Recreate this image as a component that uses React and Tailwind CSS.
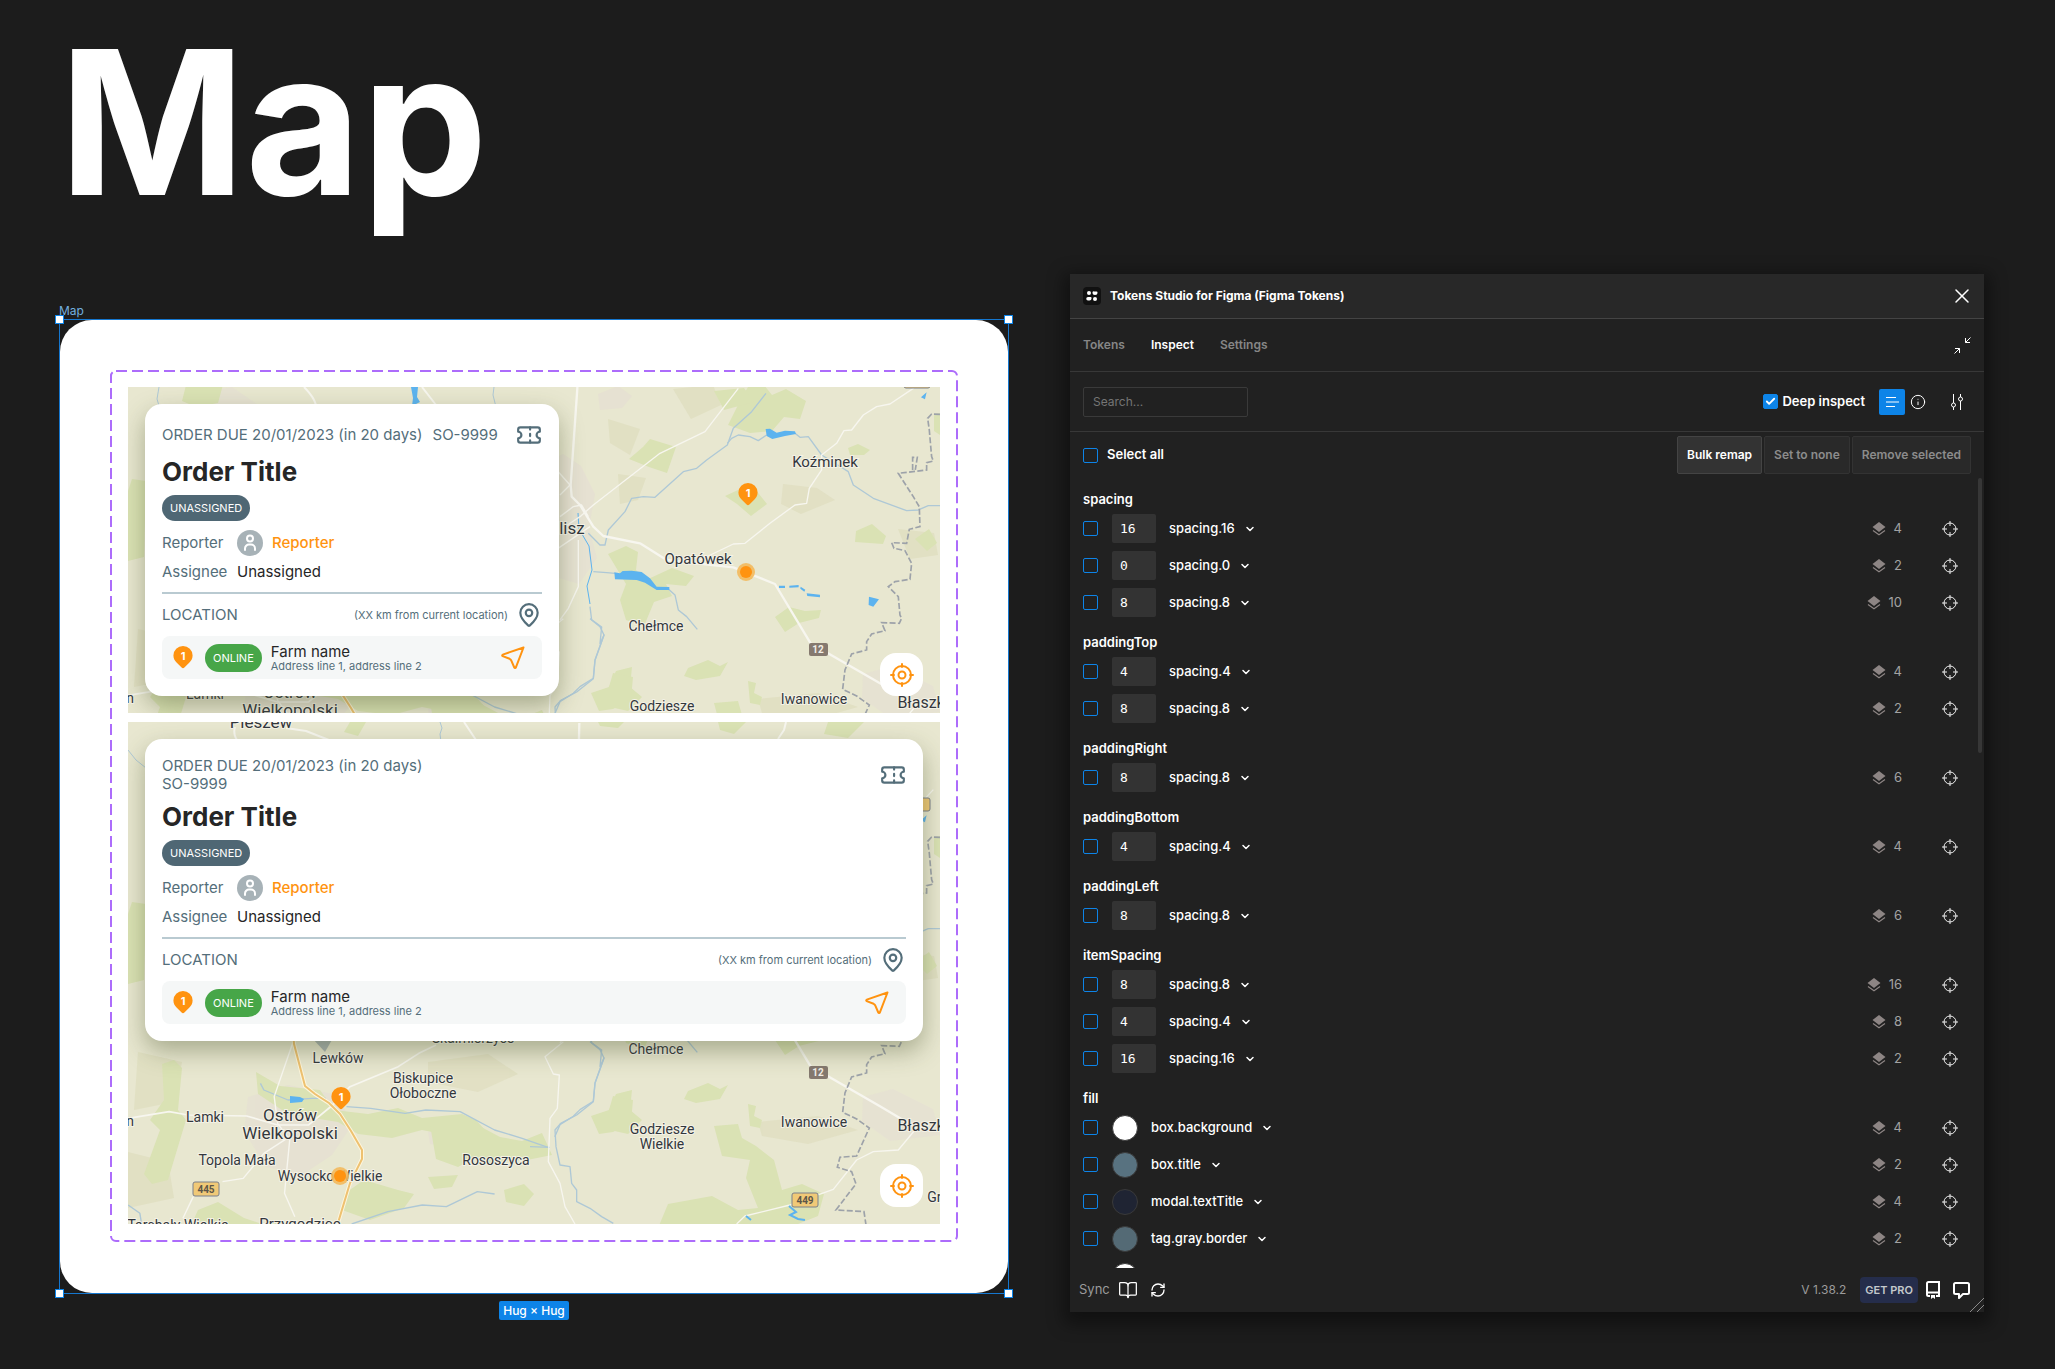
import React, { useState } from "react";
import { Ticket, MapPin, X, Check, ChevronDown, BookOpen, RefreshCw, Info } from "lucide-react";

const groups = [
{
name:"spacing",
tokens:[
{ value:"16", label:"spacing.16", count:4 },
{ value:"0", label:"spacing.0", count:2 },
{ value:"8", label:"spacing.8", count:10 }
]
},
{
name:"paddingTop",
tokens:[
{ value:"4", label:"spacing.4", count:4 },
{ value:"8", label:"spacing.8", count:2 }
]
},
{
name:"paddingRight",
tokens:[{ value:"8", label:"spacing.8", count:6 }]
},
{
name:"paddingBottom",
tokens:[{ value:"4", label:"spacing.4", count:4 }]
},
{
name:"paddingLeft",
tokens:[{ value:"8", label:"spacing.8", count:6 }]
},
{
name:"itemSpacing",
tokens:[
{ value:"8", label:"spacing.8", count:16 },
{ value:"4", label:"spacing.4", count:8 },
{ value:"16", label:"spacing.16", count:2 }
]
},
{
name:"fill",
tokens:[
{ swatch:"bg-white", label:"box.background", count:4 },
{ swatch:"bg-[#587280]", label:"box.title", count:2 },
{ swatch:"bg-[#1f2433]", label:"modal.textTitle", count:4 },
{ swatch:"bg-[#546a75]", label:"tag.gray.border", count:2 },
{ swatch:"bg-white", label:"tag.gray.text", count:2 }
]
}
];

const towns = [
{ x:133, y:6, size:17, name:"Pleszew" },
{ x:697, y:168, size:15, name:"Koźminek" },
{ x:570, y:265, size:15, name:"Opatówek" },
{ x:434, y:235, size:17, name:"Kalisz" },
{ x:345, y:321, size:14, name:"Skalmierzyce" },
{ x:528, y:332, size:14, name:"Chełmce" },
{ x:210, y:341, size:14, name:"Lewków" },
{ x:295, y:361, size:14, name:"Biskupice" },
{ x:295, y:376, size:14, name:"Ołoboczne" },
{ x:162, y:399, size:17, name:"Ostrów" },
{ x:162, y:417, size:17, name:"Wielkopolski" },
{ x:77, y:400, size:14, name:"Lamki" },
{ x:2, y:404, size:14, name:"n" },
{ x:686, y:405, size:14, name:"Iwanowice" },
{ x:795, y:409, size:16, name:"Błaszki" },
{ x:534, y:412, size:14, name:"Godziesze" },
{ x:534, y:427, size:14, name:"Wielkie" },
{ x:109, y:443, size:14, name:"Topola Mała" },
{ x:202, y:459, size:14, name:"Wysocko Wielkie" },
{ x:368, y:443, size:14, name:"Rososzyca" },
{ x:814, y:480, size:14, name:"Grab" },
{ x:50, y:508, size:14, name:"Tarchały Wielkie" },
{ x:172, y:507, size:15, name:"Przygodzice" }
];

function Terrain(){
return(
<>
<rect width="812" height="510" fill="#e8e7d0"/>

{/* built-up areas */}
<g fill="#e6dfd3" opacity="0.7">
<path d="M415 165l20-10 18 12 14 28-6 34 8 30-18 26-20-6-18 4z"/>
<path d="M120 375l40-12 50 10 14 30-20 30-30 20-36-8-22-36z"/>
<path d="M470 95l20-8 14 10-10 12-22 2z"/>
<path d="M735 375l30-8 40 20 7 26-50 6-28-20z"/>
<path d="M60 96l44-8 26 18-30 16-40-4z"/>
<path d="M300 410l40-4 24 12-28 10-34-6z"/>
</g>

{/* fields */}
<g fill="#e0dfc0" opacity="0.8">
<path d="M480 120l32 10-10 26-20-12z"/>
<path d="M545 90l40-4 8 20-30 14z"/>
<path d="M490 175l28 4-8 22-18 4z"/>
<path d="M655 185l34 4 18 12-34 14-20-10z"/>
<path d="M770 230l36 4 4 22-28 4z"/>
<path d="M630 400l60-6 40 14-50 14-46-8z"/>
<path d="M300 340l60-8 30 20-40 18-50-10z"/>
<path d="M10 330l44 10-8 40-40 8z"/>
<path d="M0 430l40 10 6 36-46 10z"/>
</g>

{/* forests */}
<g fill="#dae2b4">
<path d="M614 98l6-10 16-2 8 10 14-6 20 12-6 18-16-2-12 14-22 2-22-8z"/>
<path d="M586 92l30-3 10 14-30 8z"/>
<path d="M522 140l26 8-9 26-18-6-20-8 14-12z"/>
<path d="M597 197l26-12 16 20-16 12-14-12z"/>
<path d="M728 232l16-7 14 12-3 8-28-2z"/>
<path d="M720 149l10-4 12 6-6 5h-14z"/>
<path d="M480 255l18-8 12 6-2 18 10 10 26-12 22 8-8 10-20-2 6 12-18 6-10 24-18-6-6-20 6-16z"/>
<path d="M647 318l14-10 16 4 16-1-2 8-20 5-14 9z"/>
<path d="M488 372l16-4-2 20 12 10-14 14-18-4-14-12 12-6z"/>
<path d="M560 369l20-8 12 6 8-4-8 14-24 4-12-4z"/>
<path d="M620 382l8 2-2 10 8 4-2 8-10-2z"/>
<path d="M586 404l24-2 4 14 14 8 18 14 8 30 20-6 22 10-6 22-30 12H530l10-24 44-8 26 14 20-2-12-30 4-18-28-4z"/>
<path d="M463 394l18-6 4-14 20 4-2 22-18 10-14 2z"/>
<path d="M806 115l6-1v22l-6-4z"/>
<path d="M787 240l14-10 8 14-10 8z"/>
<path d="M34 342l12-4 8 8-4 42 8 10-18 60-16 4-8-10 16-44-10-10 14-20z"/>
<path d="M128 350l24 14 40 4 14 20 34 4 30-6 24 10 40-4 14 6 36 40-24 4-18-12-8-14-40-8-30 8-34-4-20-12-50-8-30-20z"/>
<path d="M302 403l40-4 30 16 22 4 20-8 10 22-30 6-40-8-24 14-22-8z"/>
<path d="M216 472l20-14 34 10 16 4-10 14-34 12-28-10z"/>
<path d="M300 455l30-2-6 12-18 2z"/>
<path d="M376 468l20-6 10 10-10 12-18-4z"/>
<path d="M90 480l26 16 18 6 20-2 6 10H60l10-22z"/>
<path d="M4 180l14 2-2 76-16 4v-70z"/>
<path d="M58 86l38-4-6 22-22 4-14-6z"/>
<path d="M470 0h26l-6 6-18-2zM590 0h28l-12 12-14-4zM700 0h36l-16 16-24-4z"/>
<path d="M222 0h16l-8 14-14-4z"/>
</g>

{/* rivers */}
<g fill="none" stroke="#aec8d6" strokeWidth="4" strokeLinejoin="round">
<g transform="translate(412 61) scale(.3333)">
<path d="M678 100L635 155L580 205L562 255L500 300L470 325L430 335L345 412L310 410L275 415L255 455L205 510L195 555L180 555L145 520"/>
<path d="M562 250L575 235L595 225L630 230L655 242L680 225M765 220L780 232L805 230L845 285L925 335L940 375L1000 415L1100 452L1135 450L1165 437H1200"/>
<path d="M160 635L200 638L225 640M385 687L405 705L415 750L440 770L472 808"/>
<path d="M150 740L155 780L180 800L192 825L165 900L160 955L120 980L100 1000L60 1025L45 1060L62 1021"/>
</g>
<path transform="translate(412 308) scale(.3333)" d="M150 35L185 60L180 110L192 84L165 160L160 215L110 255L62 280L45 300L48 350L60 405L90 410L95 460L110 480L110 515L150 535L185 560L220 580M-30 350L30 352"/>
<g transform="translate(-88 308) scale(.3444 .3333)">
<path d="M640 160L650 180L720 210L790 205L830 205M890 230L960 235L1060 250L1120 240L1220 245L1320 300L1400 325L1475 352M905 582L1010 545L1110 525L1180 530L1270 485L1320 492M256 525L290 550L295 582"/>
</g>
<path d="M31 88l-2 12 3 10M366 88l-1 8 3 12M312 0l2 6-2 6 1 8M0 28l8 10 10 8" strokeWidth="1"/>
</g>
<path d="M412 207l8 2M414 221l10 4M450 214l1 16 10 17 3 24-5 16 3 18" fill="none" stroke="#5cb3ef" strokeWidth="1"/>

{/* roads */}
<g fill="none" stroke="#f7f6ef" strokeLinejoin="round">
<g transform="translate(412 61) scale(.3333)" strokeWidth="5">
<path d="M118 -180L112 85L92 375L95 410L120 435L160 500L190 528L300 550L380 600L580 622L705 672L812 850L1020 970L1130 1035" strokeWidth="7"/>
<path d="M595 85L495 215L360 280L160 435L120 470L60 510" strokeWidth="4"/>
<path d="M1180 20L1120 85L1050 132L1010 140L970 165L935 210L912 212L890 250L845 285L845 330L808 385L800 430L765 435L690 490L615 550L580 552L480 600" strokeWidth="4"/>
<path d="M40 575L150 500M115 540L115 680L85 745L60 780M50 330L90 375L60 405M60 470L100 440L125 435L145 470" strokeWidth="4"/>
</g>
<g transform="translate(412 308) scale(.3333)" strokeWidth="4">
<path d="M1125 300L1075 360L1000 365L950 390L880 478L750 525L615 558L590 582"/>
<path d="M70 35L15 80L40 132L58 135L52 235L30 265L25 395L60 460L75 530L105 582"/>
</g>
<g transform="translate(-88 308) scale(.3444 .3333)" strokeWidth="5">
<path d="M256 265L375 245L430 255L600 258L690 285L780 285L850 225L900 170L1040 110L1100 70L1150 45"/>
<path d="M735 35L680 200L690 280L725 330L710 490L740 560M725 320L650 370L590 445L530 455M445 500L415 565" strokeWidth="4"/>
</g>
<path d="M107 5c-4 14 8 20 30 28M158 6l20 3 28 11M336 0l12 18M658 0l-2 8-6 9M176 88c10 10 12 16 14 26M294 88l14 18" strokeWidth="2"/>
</g>
<path d="M165 308l1 14 11 42 10 8 14 9 11 11 11 17 11 19v9l-12 24-12 40-1 14" fill="none" stroke="#fdf6dd" strokeWidth="4"/>
<path d="M165 308l1 14 11 42 10 8 14 9 11 11 11 17 11 19v9l-12 24-12 40-1 14" fill="none" stroke="#eec170" strokeWidth="2"/>

{/* lakes */}
<g fill="#5cb3ef">
<g transform="translate(412 61) scale(.3333)">
<path d="M677 207L690 206L710 218L735 212L765 214L768 222L735 228L697 237L680 228z"/>
<path d="M223 637L240 640L248 633L275 632L305 636L330 655L350 680L388 681V690L350 690L315 668L290 660L225 658z"/>
<path d="M717 677h18v7h-18zM748 677l28-2v7l-28 1zM782 680l14 9-3 6-12-9zM800 700l40 4v8l-38-4z"/>
<path d="M987 710L1017 718L1000 740L986 735zM1143 112L1160 97L1155 118z"/>
</g>
<path d="M661 484l7 6-6 3 8 4 7 1M618 494l5 4" fill="none" stroke="#5cb3ef" strokeWidth="2"/>
<path d="M162 374l10 1 4 2-2 3-12 1zM283 88h7l-1 10 3 5-8 4 1-8z"/>
<path d="M184 316h21l-8 14z" fill="#aab4b4"/>
</g>

{/* county border */}
<path transform="translate(412 61) scale(.3333)" d="M1200 163L1175 162L1163 175L1168 210L1175 290L1180 303L1160 308L1160 330L1075 340L1120 410L1138 440L1140 500L1108 508L1100 550L1055 548L1062 565L1095 572L1115 610L1110 658L1065 665L1045 680L1075 710L1080 765L1085 775L1078 790L1025 788L1035 812L995 822L980 845L980 870L935 882L915 930L908 988L950 1008L988 1035L950 1119L900 1123L892 1153L935 1166L948 1203L888 1281L972 1286L978 1325M1118 330V292H1132L1126 330" fill="none" stroke="#9da2a9" strokeWidth="5" strokeDasharray="18 7"/>

{/* town names */}
<g fontFamily="Roboto, 'Noto Sans', sans-serif" fill="#33373d" stroke="#f4f2e6" strokeWidth="2" paintOrder="stroke" textAnchor="middle">
{towns.map((t,i)=>(
<text key={i} x={t.x} y={t.y} fontSize={t.size}>{t.name}</text>
))}
</g>

{/* road shields */}
<g fontFamily="Roboto, sans-serif" fontSize="10" fontWeight="700" textAnchor="middle">
<rect x="681" y="344" width="19" height="13" rx="2" fill="#85796f"/>
<text x="690" y="354" fill="#f2eee6">12</text>
<rect x="664" y="471" width="26" height="14" rx="2" fill="#f0c977" stroke="#7a808c"/>
<text x="677" y="482" fill="#5c5648">449</text>
<rect x="65" y="460" width="26" height="14" rx="2" fill="#f0c977" stroke="#7a808c"/>
<text x="78" y="471" fill="#5c5648">445</text>
<rect x="776" y="76" width="26" height="13" rx="2" fill="#f0c977" stroke="#7a808c"/>
</g>
</>
);
}

function PinShape(){
return(
<>
<path d="M10 0a9.6 9.6 0 0 1 9.6 9.6c0 3.4-1.6 5.400-3.400 7.200l-4.800 4.800a2 2 0 0 1-2.800 0l-4.800-4.800C2 15 .4 13 .4 9.600A9.600 9.600 0 0 1 10 0z" fill="#ff9310"/>
<text x="10" y="14" fontSize="11" fontWeight="700" fill="#fff" textAnchor="middle" fontFamily="Inter, sans-serif">1</text>
</>
);
}

function LocateIcon(){
return(
<svg width="24" height="24" viewBox="0 0 24 24" fill="none" stroke="#ff9310" strokeWidth="2" strokeLinecap="round">
<circle cx="12" cy="12" r="9"/>
<circle cx="12" cy="12" r="3.500"/>
<path d="M12 1v3M12 20v3M1 12h3M20 12h3"/>
</svg>
);
}

function MapView({ top, height, pin, dot, className, children }){
return(
<div className={`relative flex items-start overflow-hidden bg-[#e8e7d0] p-[17px] ${className}`}>

<svg className="absolute inset-0 h-full w-full" viewBox={`0 ${top} 812 ${height}`} preserveAspectRatio="xMinYMin slice">
<Terrain/>
<circle cx={dot[0]} cy={dot[1]} r="9" fill="#f3b95c" opacity="0.9"/>
<circle cx={dot[0]} cy={dot[1]} r="6" fill="#ff9310"/>
<g transform={`translate(${pin[0]} ${pin[1]})`}><PinShape/></g>
</svg>

{children}

<button aria-label="Locate me" className="absolute bottom-[17px] right-[17px] flex h-[43px] w-[43px] items-center justify-center rounded-[16px] bg-white">
<LocateIcon/>
</button>

</div>
);
}

function OrderCard({ stacked, className }){
return(
<article className={`relative rounded-[17px] bg-white px-[17px] pb-[17px] pt-[18px] text-[15px] leading-[18px] text-[#546e7a] shadow-[0_10px_24px_rgba(70,80,40,0.4)] ${className}`}>

<header className="flex min-h-[26px] items-center justify-between">
<p className={stacked?"flex flex-col":"flex gap-[10px]"}>
<span>ORDER DUE 20/01/2023 (in 20 days)</span>
<span>SO-9999</span>
</p>
<Ticket size={26}/>
</header>

<h2 className="mt-[9px] text-[26px] font-bold leading-[30px] text-[#262626]">Order Title</h2>

<p className="mt-2 flex">
<span className="flex h-[26px] items-center rounded-full bg-[#4f6774] px-2 text-[11px] text-white">UNASSIGNED</span>
</p>

<div className="mt-[9px] flex h-[26px] items-center">
<span className="w-[75px]">Reporter</span>
<span className="flex h-[26px] w-[26px] items-center justify-center rounded-full bg-[#a7b2b7]">
<svg width="16" height="18" viewBox="0 0 16 18" fill="none" stroke="#fff" strokeWidth="2" strokeLinecap="round">
<circle cx="8" cy="4.500" r="3"/>
<path d="M3 16v-1.500a4 4 0 0 1 4-4h2a4 4 0 0 1 4 4V16"/>
</svg>
</span>
<a href="#reporter" className="ml-[9px] font-medium text-[#ff9310]">Reporter</a>
</div>

<div className="mt-[7px] flex items-center">
<span className="w-[75px]">Assignee</span>
<span className="text-[#262626]">Unassigned</span>
</div>

<hr className="mb-2 mt-[11px] border-t-2 border-[#b9cad1]"/>

<div className="flex h-[26px] items-center">
<span>LOCATION</span>
<span className="ml-auto mr-2 text-[11px]">(XX km from current location)</span>
<MapPin size={26}/>
</div>

<div className="mt-2 flex h-[43px] items-center rounded-lg bg-[#f5f7f7] px-[11px]">
<svg width="20" height="24" viewBox="0 0 20 24"><PinShape/></svg>
<span className="ml-[12px] flex h-7 items-center rounded-full bg-[#47a648] px-2 text-[11px] text-white">ONLINE</span>
<div className="ml-[9px] flex-1">
<p className="leading-[17px] text-[#262626]">Farm name</p>
<p className="text-[11px] leading-[13px]">Address line 1, address line 2</p>
</div>
<a href="#navigate" aria-label="Navigate" className="mr-[5px]">
<svg width="26" height="26" viewBox="0 0 26 26" fill="none" stroke="#ff9310" strokeWidth="2" strokeLinejoin="round">
<path d="M23.500 2.500L2.800 9.600c-.8.300-.8 1.200-.100 1.500l6.900 2.700c.7.300 1.200.8 1.500 1.400l3.200 7.300c.3.700 1.300.7 1.600-.1z"/>
</svg>
</a>
</div>

</article>
);
}

function Tick({ id, checked, onChange }){
return(
<span className="grid h-[15px] w-[15px] shrink-0 place-items-center">
<input id={id} type="checkbox" checked={checked} onChange={onChange} aria-label={id}
className="col-start-1 row-start-1 h-[15px] w-[15px] appearance-none rounded-[2px] border border-[#0d84e8] checked:bg-[#0d84e8]"/>
{checked&&<Check size={11} strokeWidth={4} className="pointer-events-none col-start-1 row-start-1 text-white"/>}
</span>
);
}

function TokenRow({ id, token, checked, onToggle }){
return(
<li className="flex h-[29px] shrink-0 items-center">
<Tick id={id} checked={checked} onChange={onToggle}/>
{token.swatch
?<span className={`ml-[14px] h-[26px] w-[26px] rounded-full border border-[#3a3a3a] ${token.swatch}`}></span>
:<span className="ml-[14px] flex h-[29px] w-[44px] items-center rounded-[2px] bg-[#333333] pl-2 font-['DejaVu_Sans_Mono',monospace] text-[13px]">{token.value}</span>}
<button className="ml-[13px] flex items-center gap-[9px] font-medium">
{token.label}
<ChevronDown size={12} strokeWidth={3}/>
</button>
<span className="ml-auto flex items-center gap-2 text-[#a3a3a3]">
<svg width="14" height="15" viewBox="0 0 14 15">
<path d="M7 1l6.500 5L7 11 .5 6z" fill="#8d8584"/>
<path d="M1 9.500l6 4.300 6-4.300" fill="none" stroke="#8d8584" strokeWidth="1.200"/>
</svg>
{token.count}
</span>
<button aria-label="Select layers" className="ml-10 mr-5">
<svg width="16" height="16" viewBox="0 0 16 16" fill="none" stroke="#f0f0f0">
<circle cx="8" cy="8" r="6"/>
<path d="M8 0v5M8 11v5M0 8h5M11 8h5"/>
</svg>
</button>
</li>
);
}

function TokensPanel(){

const [query,setQuery]=useState("");
const [deep,setDeep]=useState(true);
const [picked,setPicked]=useState({});

const ids = groups.flatMap(g=>g.tokens.map((t,i)=>g.name+"-"+i));
const all = ids.every(id=>picked[id]);

const toggle=(id)=>{
setPicked(p=>({...p,[id]:!p[id]}));
};

const toggleAll=()=>{
const next={};
ids.forEach(id=>{ next[id]=!all; });
setPicked(next);
};

return(
<section className="relative flex h-[1038px] min-w-0 flex-col bg-[#212121] text-[13px] text-white shadow-[0_6px_16px_6px_rgba(0,0,0,0.4)]">

<header className="flex h-[45px] shrink-0 items-center border-b border-[#444444] bg-[#282828] pl-[13px] pr-[10px]">
<svg width="18" height="18" viewBox="0 0 18 18">
<rect width="18" height="18" rx="4" fill="#111"/>
<g fill="#fff">
<circle cx="6" cy="6" r="2"/><path d="M11 4.500h2.500a1 1 0 0 1 1 1 2.500 2.500 0 0 1-5 0 1 1 0 0 1 1.500-1z"/>
<path d="M5 10h2.500a1 1 0 0 1 1 1.500 2 2 0 0 1-2 2H5a1.700 1.700 0 0 1 0-3.500z"/><circle cx="12" cy="12" r="2"/>
</g>
</svg>
<h2 className="ml-[9px] text-[12px] font-bold">Tokens Studio for Figma (Figma Tokens)</h2>
<button aria-label="Close" className="ml-auto"><X size={24} strokeWidth={1.5}/></button>
</header>

<nav className="flex h-[53px] shrink-0 items-center gap-[26px] border-b border-[#383838] px-[13px] text-[12px] font-semibold text-[#868686]">
<a href="#tokens">Tokens</a>
<a href="#inspect" className="text-white">Inspect</a>
<a href="#settings">Settings</a>
<button aria-label="Minimize" className="ml-auto">
<svg width="17" height="17" viewBox="0 0 17 17" fill="none" stroke="#fff">
<path d="M16.500 .5l-5 5M11.500 1v4.500H16M.5 16.500l5-5M1 11.500h4.500V16"/>
</svg>
</button>
</nav>

<div className="flex h-[60px] shrink-0 items-center border-b border-[#383838] pl-[13px] pr-5">
<input type="text" aria-label="Search" placeholder="Search..." value={query} onChange={e=>setQuery(e.target.value)}
className="h-[30px] w-[165px] rounded-[2px] border border-[#3a3a3a] bg-transparent px-[9px] text-[12px] placeholder:text-[#757575]"/>
<label htmlFor="Deep inspect" className="ml-auto flex items-center gap-1 font-semibold">
<Tick id="Deep inspect" checked={deep} onChange={()=>setDeep(!deep)}/>
Deep inspect
</label>
<button aria-label="List view" className="ml-[14px] flex h-[26px] w-[26px] items-center justify-center rounded-[2px] bg-[#0d84e8]">
<svg width="14" height="12" viewBox="0 0 14 12" stroke="#fff"><path d="M1 1.500h10M1 6h13M1 10.500h9"/></svg>
</button>
<button aria-label="Info" className="ml-[5px]"><Info size={16} strokeWidth={1.5}/></button>
<button aria-label="Filters" className="ml-6">
<svg width="14" height="16" viewBox="0 0 14 16" fill="none" stroke="#fff">
<circle cx="3.500" cy="11" r="2"/><circle cx="10.500" cy="5" r="2"/>
<path d="M3.500 0v9M3.500 13v3M10.500 0v3M10.500 7v9"/>
</svg>
</button>
</div>

<div className="flex shrink-0 items-center gap-[2px] px-[13px] py-1">
<label htmlFor="Select all" className="mr-auto flex items-center gap-[9px] font-semibold">
<Tick id="Select all" checked={all} onChange={toggleAll}/>
Select all
</label>
<button className="h-[38px] rounded-[2px] border border-[#444444] bg-[#333333] px-[9px] text-[12px] font-semibold">Bulk remap</button>
<button className="h-[38px] rounded-[2px] border border-[#333333] bg-[#292929] px-[9px] text-[12px] font-semibold text-[#8c8c8c]">Set to none</button>
<button className="h-[38px] rounded-[2px] border border-[#333333] bg-[#292929] px-[9px] text-[12px] font-semibold text-[#8c8c8c]">Remove selected</button>
</div>

<div className="flex min-h-0 flex-1 overflow-hidden">
<div className="flex min-w-0 flex-1 flex-col gap-[15px] pl-[13px] pt-[11px]">
{groups.map(g=>(
<div key={g.name} className="flex shrink-0 flex-col gap-1">
<h3 className="font-semibold leading-[21px]">{g.name}</h3>
<ul className="flex flex-col gap-2">
{g.tokens.map((t,i)=>(
<TokenRow key={i} id={g.name+"-"+i} token={t} checked={!!picked[g.name+"-"+i]} onToggle={()=>toggle(g.name+"-"+i)}/>
))}
</ul>
</div>
))}
</div>
<div className="mr-[2px] w-1 shrink-0"><div className="h-[275px] rounded-full bg-[#373737]"></div></div>
</div>

<footer className="flex h-[44px] shrink-0 items-center pl-[9px] pr-[13px] text-[#9b9b9b]">
<span>Sync</span>
<button aria-label="Docs" className="ml-2 text-white"><BookOpen size={20} strokeWidth={1.5}/></button>
<button aria-label="Refresh" className="ml-3 text-white"><RefreshCw size={16} strokeWidth={2}/></button>
<span className="ml-auto text-[12px]">V 1.38.2</span>
<button className="ml-[14px] h-[26px] rounded-[4px] bg-[#252d4b] px-[5px] text-[11px] font-semibold text-[#c4c9cc]">GET PRO</button>
<button aria-label="Changelog" className="ml-2">
<svg width="15" height="18" viewBox="0 0 15 18" fill="none" stroke="#fff" strokeWidth="2">
<path d="M4 15H2.500A1.500 1.500 0 0 1 1 13.500V2.500A1.500 1.500 0 0 1 2.500 1H13v14h-3M1 11.500h12"/>
<path d="M5 14h4v4l-2-1.500L5 18z" fill="#fff" stroke="none"/>
</svg>
</button>
<button aria-label="Feedback" className="ml-3">
<svg width="18" height="17" viewBox="0 0 18 17" fill="none" stroke="#fff" strokeWidth="2" strokeLinejoin="round">
<path d="M2.500 1h12A1.500 1.500 0 0 1 16 2.500v8a1.500 1.500 0 0 1-1.500 1.500H10l-4 4v-4H2.500A1.500 1.500 0 0 1 1 10.500v-8A1.500 1.500 0 0 1 2.500 1z"/>
</svg>
</button>
</footer>

<svg className="absolute bottom-0 right-0" width="14" height="14" viewBox="0 0 14 14" stroke="#8a8a8a"><path d="M0 14L14 0M7 14l7-7"/></svg>

</section>
);
}

export default function App() {

return(

<div className="min-h-screen bg-[#1c1c1c] pb-8 pl-[59px] pr-[71px] pt-4 font-['Inter',sans-serif]">

<h1 className="h-[258px] text-[200px] font-bold leading-[212px] text-white">Map</h1>

<main className="grid grid-cols-[950fr_914fr] items-start gap-[61px]">

<section className="min-w-0 pt-[29px]">

<p className="h-4 text-[12px] leading-4 text-[#72aede]">Map</p>

{/* selected frame */}
<div className="relative border border-[#1577cf]">
<div className="rounded-[32px] bg-white px-[51px] pb-[52px] pt-[51px]">
<div className="relative flex flex-col gap-[9px] px-[17px] pb-[17px] pt-4">

<svg className="pointer-events-none absolute inset-0 h-full w-full overflow-visible">
<rect width="100%" height="100%" rx="5" fill="none" stroke="#ad6cfb" strokeWidth="2" strokeDasharray="11 5"/>
</svg>

<MapView top={88} height={326} pin={[610,184]} dot={[618,273]} className="min-h-[326px]">
<OrderCard className="w-[414px]"/>
</MapView>

<MapView top={0} height={502} pin={[203,365]} dot={[212,454]} className="min-h-[502px]">
<OrderCard stacked className="w-full"/>
</MapView>

</div>
</div>

<i className="absolute -left-[5px] -top-[5px] h-[9px] w-[9px] border border-[#0d84e8] bg-white"></i>
<i className="absolute -right-[5px] -top-[5px] h-[9px] w-[9px] border border-[#0d84e8] bg-white"></i>
<i className="absolute -bottom-[5px] -left-[5px] h-[9px] w-[9px] border border-[#0d84e8] bg-white"></i>
<i className="absolute -bottom-[5px] -right-[5px] h-[9px] w-[9px] border border-[#0d84e8] bg-white"></i>
</div>

<p className="mt-[7px] flex justify-center">
<span className="rounded-[2px] bg-[#0d84e8] px-1 text-[12px] font-medium leading-[19px] text-white">Hug × Hug</span>
</p>

</section>

<TokensPanel/>

</main>

</div>

);

}
